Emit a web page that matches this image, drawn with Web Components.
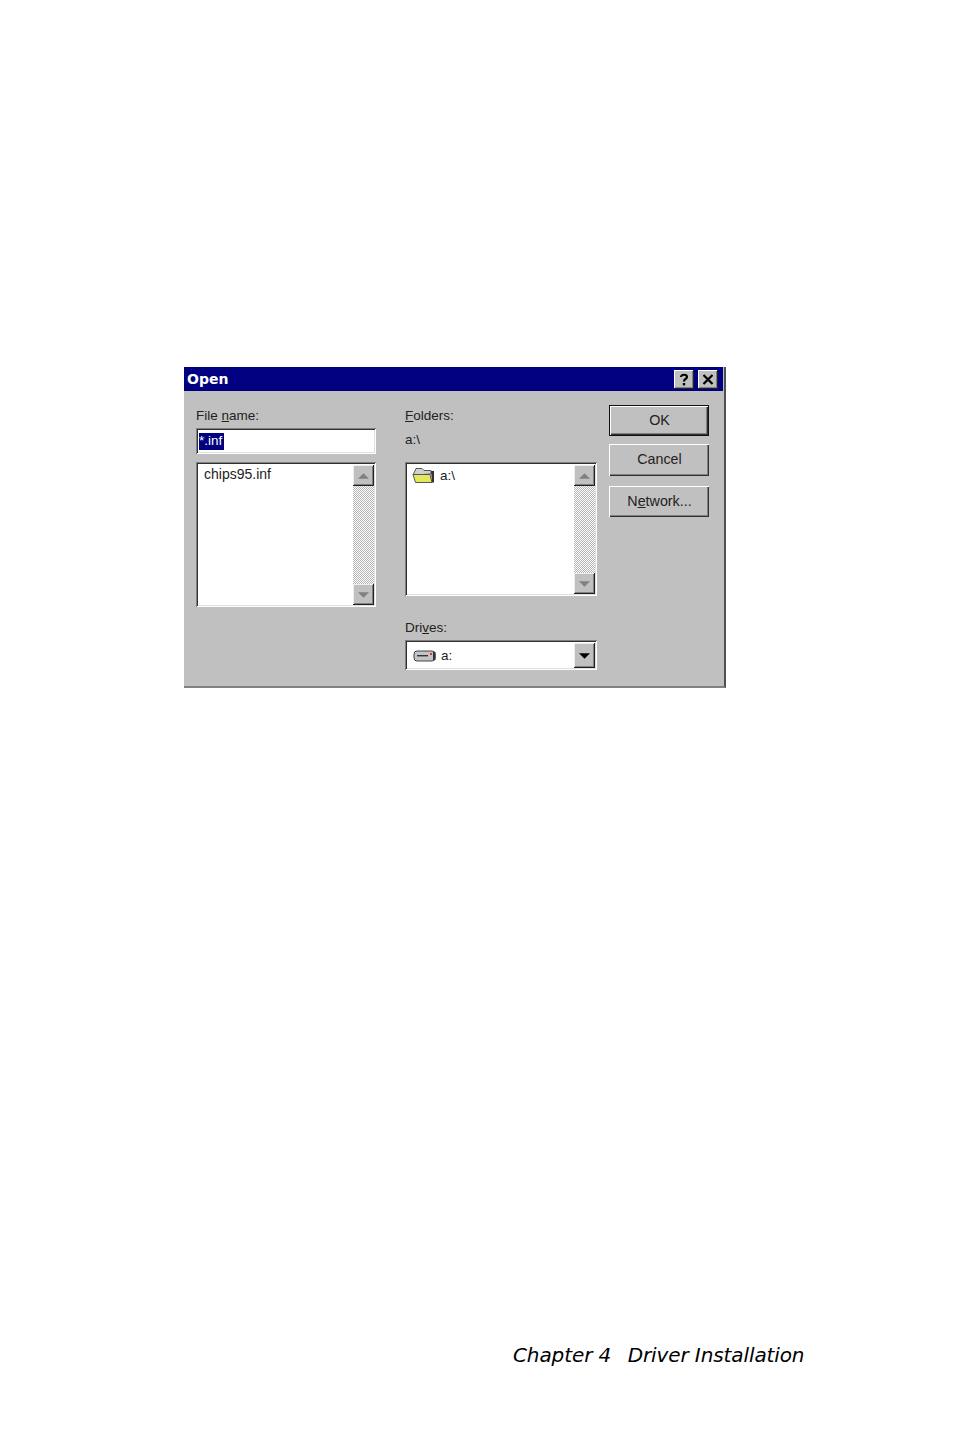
<!DOCTYPE html>
<html>
<head>
<meta charset="utf-8">
<title>Open</title>
<style>
    html, body { margin: 0; padding: 0; background: #fff; }
</style>
</head>
<body>
<manual-page>
    <win-dialog title="Open">
        <div slot="files">
            <win-label><span>File <u>n</u>ame:</span></win-label>
            <win-field selected="*.inf"></win-field>
            <win-listbox style="height:145px; margin-top:8px"><span style="margin-left:5px; font-size:14px; line-height:19px">chips95.inf</span></win-listbox>
        </div>
        <div slot="folders">
            <win-label><span><u>F</u>olders:</span></win-label>
            <win-label style="height:23px"><span>a:\</span></win-label>
            <win-listbox style="height:134px; margin-top:8px">
                <span style="display:flex; align-items:center; margin:1px 0 0 4px">
                    <svg width="23" height="18" viewBox="0 0 23 18" style="margin-right:5px">
                        <path d="M1 9 L4 2.5 H10 L12 4.5 H19 V8 Z" fill="#d0d0d0" stroke="#555" stroke-width="1"/>
                        <path d="M1 8.5 H18 L20 16.5 H3.5 Z" fill="#e6e65c" stroke="#555" stroke-width="1"/>
                        <path d="M19 5 H22 V16.5 H20 Z" fill="#333"/>
                    </svg>a:\
                </span>
            </win-listbox>
            <win-label style="margin-top:21px"><span>Dri<u>v</u>es:</span></win-label>
            <win-combo>
                <svg width="24" height="14" viewBox="0 0 24 14" style="margin-right:4px">
                    <rect x="1" y="2" width="21" height="10" rx="3" fill="#c4c4c4" stroke="#444"/>
                    <rect x="4" y="6" width="11" height="1.4" fill="#333"/>
                    <rect x="17" y="4" width="2" height="2" fill="#e03030"/>
                    <rect x="20" y="3" width="2.5" height="8" fill="#333"/>
                </svg>a:
            </win-combo>
        </div>
        <div slot="actions">
            <win-button default style="height:31px">OK</win-button>
            <win-button style="height:32px; margin-top:8px">Cancel</win-button>
            <win-button style="height:31px; margin-top:10px">N<u>e</u>twork...</win-button>
        </div>
    </win-dialog>
    <page-footer>Chapter 4&nbsp;&nbsp;<span style="margin-left:4px">Driver Installation</span></page-footer>
</manual-page>

<script>
// page sheet: dialog near the middle, running footer at the bottom
class ManualPage extends HTMLElement {
    constructor() {
        super();
        this.attachShadow({ mode: 'open' });
        this.shadowRoot.innerHTML = `
            <style>
                :host {
                    display: flex; flex-direction: column;
                    box-sizing: border-box;
                    height: 1430px; width: 954px;
                    padding: 367px 0 0 184px;
                    background: #fff;
                }
            </style>
            <slot></slot>
        `;
    }
}
customElements.define('manual-page', ManualPage);

class PageFooter extends HTMLElement {
    constructor() {
        super();
        this.attachShadow({ mode: 'open' });
        this.shadowRoot.innerHTML = `
            <style>
                :host {
                    display: block;
                    margin-top: 654px;
                    padding-left: 329px;
                    font: italic 20px/26px "DejaVu Sans", sans-serif;
                    letter-spacing: -0.1px;
                    color: #000;
                    white-space: nowrap;
                }
            </style>
            <slot></slot>
        `;
    }
}
customElements.define('page-footer', PageFooter);

class WinDialog extends HTMLElement {
    constructor() {
        super();
        this.attachShadow({ mode: 'open' });
    }

    connectedCallback() {
        const title = this.getAttribute('title') || '';
        this.shadowRoot.innerHTML = `
            <style>
                :host {
                    display: block;
                    box-sizing: border-box;
                    width: 542px; height: 321px;
                    background: #c0c0c0;
                    border-right: 2px solid #505050;
                    border-bottom: 2px solid #808080;
                    font: 13.5px "Liberation Sans", Arial, sans-serif;
                    color: #222;
                }
                .titlebar {
                    height: 24px; margin-right: 1px;
                    background: #000080; color: #fff;
                    display: flex; align-items: center; justify-content: space-between;
                    padding: 0 5px 0 3px;
                    font: bold 14px "DejaVu Sans", sans-serif;
                }
                .controls { display: flex; gap: 4px; }
                .cap {
                    box-sizing: border-box;
                    width: 20px; height: 19px;
                    background: #c0c0c0;
                    box-shadow: inset -1px -1px 0 #222, inset 1px 1px 0 #fff, inset -2px -2px 0 #808080;
                    display: flex; align-items: center; justify-content: center;
                }
                .content { display: flex; padding: 14px 0 0 12px; }
                .col-files { width: 180px; margin-right: 29px; }
                .col-folders { width: 192px; margin-right: 12px; }
                .col-actions { width: 100px; }
            </style>
            <div class="titlebar">
                <span>${title}</span>
                <div class="controls">
                    <div class="cap"><svg width="12" height="13" viewBox="0 0 12 13"><path d="M3 4 C3 1 9 1 9 4 C9 6 6 6 6 8.5" fill="none" stroke="#000" stroke-width="2.2"/><rect x="4.8" y="10" width="2.4" height="2.4" fill="#000"/></svg></div>
                    <div class="cap"><svg width="12" height="11" viewBox="0 0 12 11"><path d="M1.5 1 L10.5 10 M10.5 1 L1.5 10" stroke="#000" stroke-width="2.2"/></svg></div>
                </div>
            </div>
            <div class="content">
                <div class="col-files"><slot name="files"></slot></div>
                <div class="col-folders"><slot name="folders"></slot></div>
                <div class="col-actions"><slot name="actions"></slot></div>
            </div>
        `;
    }
}
customElements.define('win-dialog', WinDialog);

class WinLabel extends HTMLElement {
    constructor() {
        super();
        this.attachShadow({ mode: 'open' });
        this.shadowRoot.innerHTML = `
            <style>
                :host { display: flex; align-items: center; height: 20px; padding-bottom: 3px; }
            </style>
            <slot></slot>
        `;
    }
}
customElements.define('win-label', WinLabel);

const SUNKEN = 'inset 1px 1px 0 #808080, inset -1px -1px 0 #fff, inset 2px 2px 0 #303030, inset -2px -2px 0 #dfdfdf';

class WinField extends HTMLElement {
    constructor() {
        super();
        this.attachShadow({ mode: 'open' });
    }

    connectedCallback() {
        this.shadowRoot.innerHTML = `
            <style>
                :host {
                    display: flex; align-items: center;
                    box-sizing: border-box;
                    height: 26px; padding-left: 3px;
                    background: #fff;
                    box-shadow: ${SUNKEN};
                }
                .sel { background: #000080; color: #fff; width: 25px; height: 17px; line-height: 16px; overflow: hidden; }
            </style>
            <span class="sel">${this.getAttribute('selected') || ''}</span>
        `;
    }
}
customElements.define('win-field', WinField);

class WinScrollButton extends HTMLElement {
    constructor() {
        super();
        this.attachShadow({ mode: 'open' });
    }

    connectedCallback() {
        const up = this.getAttribute('dir') === 'up';
        const color = this.getAttribute('color') || '#808080';
        const points = up ? '0,6 6,0 12,6' : '0,0 12,0 6,6';
        this.shadowRoot.innerHTML = `
            <style>
                :host {
                    display: flex; align-items: center; justify-content: center;
                    box-sizing: border-box;
                    width: 21px; height: 21px; flex: none;
                    background: #c0c0c0;
                    box-shadow: inset -1px -1px 0 #222, inset 1px 1px 0 #eee, inset -2px -2px 0 #808080;
                }
                svg { width: 11px; height: 6px; }
            </style>
            <svg viewBox="0 0 12 6"><polygon points="${points}" fill="${color}"/></svg>
        `;
    }
}
customElements.define('win-scroll-button', WinScrollButton);

class WinListbox extends HTMLElement {
    constructor() {
        super();
        this.attachShadow({ mode: 'open' });
        this.shadowRoot.innerHTML = `
            <style>
                :host {
                    display: flex;
                    box-sizing: border-box;
                    padding: 3px 2px 2px 3px;
                    background: #fff;
                    box-shadow: ${SUNKEN};
                }
                .items { flex: 1; line-height: 17px; }
                .bar {
                    width: 21px; display: flex; flex-direction: column; justify-content: space-between;
                    background: repeating-conic-gradient(#fff 0 25%, #b4b4b4 0 50%) 0 0 / 2px 2px;
                }
            </style>
            <div class="items"><slot></slot></div>
            <div class="bar">
                <win-scroll-button dir="up"></win-scroll-button>
                <win-scroll-button dir="down"></win-scroll-button>
            </div>
        `;
    }
}
customElements.define('win-listbox', WinListbox);

class WinCombo extends HTMLElement {
    constructor() {
        super();
        this.attachShadow({ mode: 'open' });
        this.shadowRoot.innerHTML = `
            <style>
                :host {
                    display: flex; align-items: center;
                    box-sizing: border-box;
                    height: 30px; padding: 3px 2px 2px 8px;
                    background: #fff;
                    box-shadow: ${SUNKEN};
                }
                .value { flex: 1; display: flex; align-items: center; }
                win-scroll-button { height: 25px; }
            </style>
            <div class="value"><slot></slot></div>
            <win-scroll-button dir="down" color="#000"></win-scroll-button>
        `;
    }
}
customElements.define('win-combo', WinCombo);

class WinButton extends HTMLElement {
    constructor() {
        super();
        this.attachShadow({ mode: 'open' });
        this.shadowRoot.innerHTML = `
            <style>
                :host {
                    display: flex; align-items: center; justify-content: center;
                    box-sizing: border-box;
                    padding: 0 0 2px 1px;
                    background: #c0c0c0;
                    box-shadow: inset 1px 1px 0 #fff, inset -1px -1px 0 #303030, inset -2px -2px 0 #808080;
                    font-size: 14.3px;
                }
                :host([default]) {
                    box-shadow: inset 0 0 0 1px #111, inset 2px 2px 0 #fff, inset -2px -2px 0 #303030, inset -3px -3px 0 #808080;
                }
            </style>
            <slot></slot>
        `;
    }
}
customElements.define('win-button', WinButton);
</script>
</body>
</html>
